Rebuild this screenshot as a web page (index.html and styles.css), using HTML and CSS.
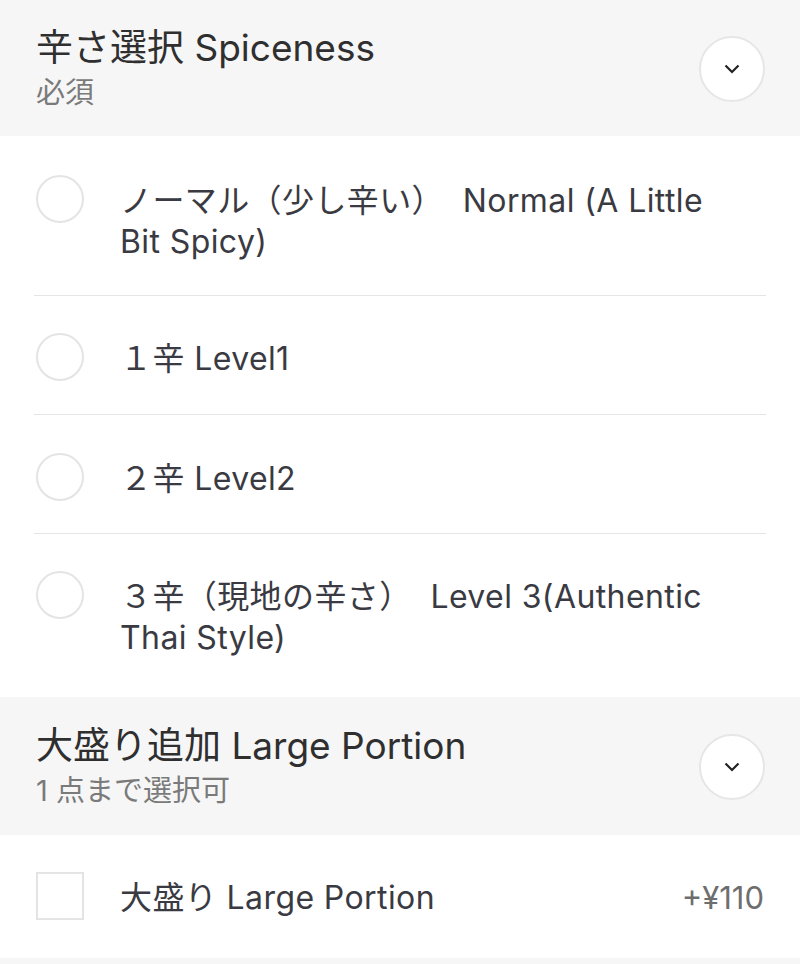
FILE: index.html
```html
<!DOCTYPE html>
<html lang="ja">
<head>
<meta charset="utf-8">
<link rel="stylesheet" href="styles.css">
</head>
<body>
<div class="page">
  <section class="group">
    <div class="group-head">
      <div class="head-text">
        <div class="title">辛さ選択 Spiceness</div>
        <div class="sub">必須</div>
      </div>
      <div class="chev">
        <svg width="16" height="10" viewBox="0 0 16 10"><path d="M1.5 1.5 L8 8 L14.5 1.5" fill="none" stroke="#222" stroke-width="2.2"/></svg>
      </div>
    </div>
    <div class="options">
      <div class="opt"><span class="radio"></span><span class="label">ノーマル（少し辛い）  Normal (A Little Bit Spicy)</span></div>
      <div class="opt"><span class="radio"></span><span class="label">１辛 Level1</span></div>
      <div class="opt"><span class="radio"></span><span class="label">２辛 Level2</span></div>
      <div class="opt"><span class="radio"></span><span class="label">３辛（現地の辛さ）  Level 3(Authentic Thai Style)</span></div>
    </div>
  </section>
  <section class="group">
    <div class="group-head head-second">
      <div class="head-text">
        <div class="title">大盛り追加 Large Portion</div>
        <div class="sub">1 点まで選択可</div>
      </div>
      <div class="chev">
        <svg width="16" height="10" viewBox="0 0 16 10"><path d="M1.5 1.5 L8 8 L14.5 1.5" fill="none" stroke="#222" stroke-width="2.2"/></svg>
      </div>
    </div>
    <div class="options">
      <div class="opt check-row"><span class="checkbox"></span><span class="label">大盛り Large Portion</span><span class="price">+¥110</span></div>
    </div>
  </section>
  <div class="footer-strip"></div>
</div>
</body>
</html>
```
FILE: styles.css
```css
html, body {
  margin: 0;
  padding: 0;
  background: #ffffff;
}
.page {
  width: 800px;
  font-family: Inter, "Noto Sans CJK JP", sans-serif;
  color: #333333;
}
.group-head {
  background: #f6f6f6;
  display: flex;
  align-items: center;
  justify-content: space-between;
  padding: 25px 35px 24px 36px;
}
.head-second {
  padding-top: 26px;
  padding-bottom: 25px;
}
.title {
  font-size: 37px;
  line-height: 46px;
  color: #2f2f2f;
}
.sub {
  margin-top: 3px;
  font-size: 29px;
  line-height: 38px;
  color: #7a7a7a;
}
.chev {
  width: 62px;
  height: 62px;
  border-radius: 50%;
  background: #ffffff;
  border: 2px solid #e6e6e6;
  display: flex;
  align-items: center;
  justify-content: center;
}
.options {
  padding: 0 34px;
}
.opt {
  display: flex;
  align-items: flex-start;
  padding: 42px 0 35px 0;
  border-top: 1px solid #e6e6e6;
}
.opt:first-child {
  border-top: none;
  padding-top: 44px;
  padding-bottom: 33px;
}
.opt:nth-child(3) {
  padding-top: 43px;
  padding-bottom: 34px;
}
.opt:last-child {
  padding-bottom: 39px;
}
.radio {
  flex: none;
  width: 44px;
  height: 44px;
  border-radius: 50%;
  border: 2px solid #e4e4e4;
  margin: -5px 36px -2px 2px;
}
.label {
  flex: 1;
  font-size: 32px;
  line-height: 41px;
  letter-spacing: 0.4px;
  color: #3a3a42;
  white-space: pre-wrap;
  padding-right: 34px;
}
.opt.check-row {
  padding: 42px 0 40px 0;
  align-items: flex-start;
}
.checkbox {
  flex: none;
  width: 44px;
  height: 44px;
  border: 2px solid #e4e4e4;
  margin: -5px 36px -2px 2px;
}
.price {
  flex: none;
  font-size: 31px;
  line-height: 41px;
  color: #6e6e6e;
  margin-right: 2px;
}
.footer-strip {
  height: 10px;
  background: #f6f6f6;
}
```
